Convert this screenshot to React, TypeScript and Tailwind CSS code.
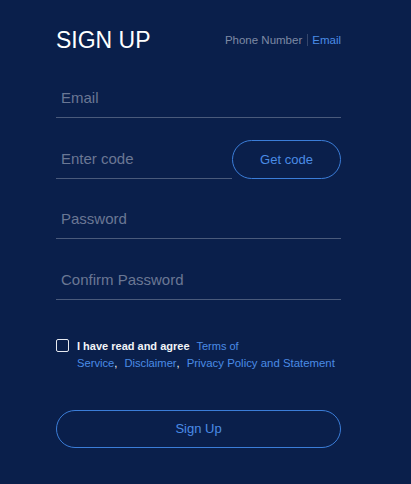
import React from "react";

export default function App() {
  const inputCls =
    "block h-[40px] w-full bg-transparent border-0 border-b border-solid border-[#4a5a7b] pl-[5px] text-[15px] text-white outline-none placeholder:text-[#6a7794]";
  return (
    <div className="min-h-[484px] w-full bg-[#0a1f4b] font-['Liberation_Sans',Arial,sans-serif]">
      <div className="ml-[56px] w-[285px] pt-[28px]">
        <div className="flex h-[24px] items-center justify-between">
          <h1 className="text-[23px] leading-[24px] text-white font-normal">SIGN UP</h1>
          <div className="flex items-center text-[11.5px] leading-[14px]">
            <span className="text-[#7e8aa4]">Phone Number</span>
            <span className="ml-[5px] mr-[4px] h-[12px] w-px bg-[#34466c]" />
            <span className="text-[#4a8ce6]">Email</span>
          </div>
        </div>

        <div className="mt-[26px]">
          <input className={inputCls} placeholder="Email" />
        </div>

        <div className="mt-[21px] flex items-end">
          <div className="w-[176px] shrink-0">
            <input className={inputCls} placeholder="Enter code" />
          </div>
          <button className="flex h-[39px] flex-1 items-center justify-center rounded-full border border-[#3b7dd8] text-[13px] text-[#4a8ce6]">
            Get code
          </button>
        </div>

        <div className="mt-[20px]">
          <input className={inputCls} type="password" placeholder="Password" />
        </div>

        <div className="mt-[21px]">
          <input className={inputCls} type="password" placeholder="Confirm Password" />
        </div>

        <div className="mt-[38px] flex items-start">
          <span className="mt-[1px] block h-[13px] w-[13px] shrink-0 rounded-[2px] border border-[#e6e9f0]" />
          <p className="ml-[8px] text-[11px] leading-[17px]">
            <span className="font-bold text-[#f2f4f8]">I have read and agree</span>
            <a className="ml-[7px] text-[#4a8ce6]">Terms of</a>
            <br />
            <a className="text-[11.2px] text-[#4a8ce6]">Service</a>
            <span className="text-white">,</span>
            <a className="ml-[7px] text-[11.2px] text-[#4a8ce6]">Disclaimer</a>
            <span className="text-white">,</span>
            <a className="ml-[7px] text-[11.4px] text-[#4a8ce6]">Privacy Policy and Statement</a>
          </p>
        </div>

        <button className="mt-[38px] flex h-[38px] w-full items-center justify-center rounded-full border border-[#3b7dd8] text-[13px] text-[#4a8ce6]">
          Sign Up
        </button>
      </div>
    </div>
  );
}
